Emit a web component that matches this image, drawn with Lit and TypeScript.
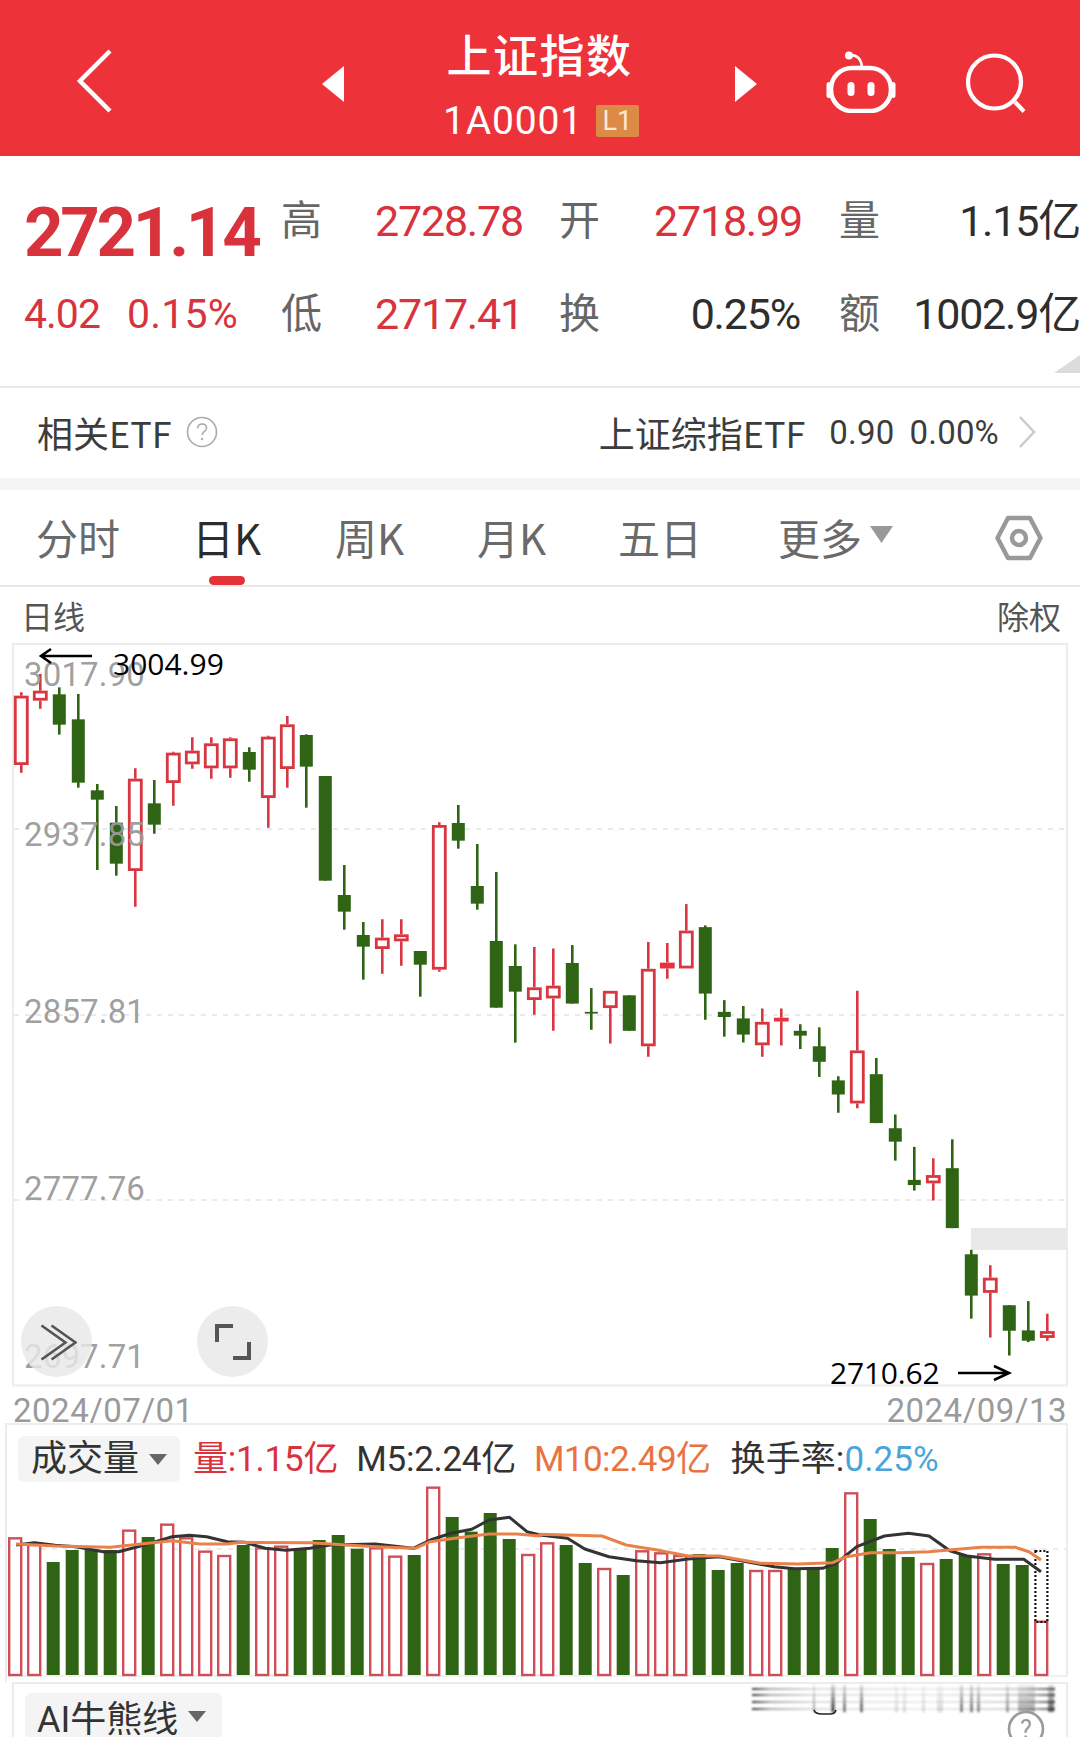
import { LitElement, html, css, svg } from "lit";
import { customElement } from "lit/decorators.js";

const GREEN = "#2f6414";
const FX = 2.904;

type C = [string, number, number, number, number];
// candle coordinates are read from the reference: first block y = 660 + v/3
const A: C[] = [
  ["r",97,107,315,338],["r",42,92,122,146],["g",82,103,194,224],["g",102,178,368,383],["g",372,391,419,630],
  ["g",438,488,611,647],["r",325,356,633,740],["g",360,430,494,521],["r",275,278,369,437],["r",232,272,313,326],
  ["r",232,250,325,356],["r",232,235,325,353],["g",262,276,329,365],["r",227,230,414,503],["r",168,193,327,383],
  ["g",223,225,320,443],["g",348,348,662,662],["g",615,705,755,809],["g",786,825,860,959],["r",778,833,867,941],
  ["r",778,823,844,917],["g",873,873,914,1010],["r",487,495,929,935],["g",435,489,542,566],["g",552,678,731,749],
  ["g",636,843,1043,1043],["g",853,918,995,1148],["r",861,982,1020,1064],
];
// second block y = 860 + v/2.904
const B: C[] = [
  ["r",257,365,402,496],["g",247,299,417,417],["g",372,441,446,493],["r",380,380,430,533],["g",393,393,496,496],
  ["r",238,316,541,571],["r",241,298,315,345],["r",128,205,315,315],["g",190,195,388,464],["g",407,441,456,513],
  ["g",424,460,507,530],["r",431,470,538,571],["r",431,458,468,539],["g",477,496,510,549],["g",486,541,586,630],
  ["g",628,640,681,734],["r",380,553,707,721],["g",575,622,764,764],["g",739,779,818,873],["g",833,929,944,960],
  ["r",866,915,939,989],["g",811,895,1069,1069],["g",1132,1145,1265,1332],["r",1177,1213,1257,1387],
  ["g",1293,1293,1367,1439],["g",1281,1366,1396,1400],["r",1318,1368,1388,1396],
];
const candles = [
  ...A.map(c => [c[0], ...c.slice(1).map(v => 660 + (v as number) / 3)]),
  ...B.map(c => [c[0], ...c.slice(1).map(v => 860 + (v as number) / FX)]),
] as C[];

const VA = [745,765,816,780,780,780,722,741,704,745,785,798,765,775,770,775,750,735,776,775,800,795,593,681,725,669,747,795];
const VB = [430,435,489,507,525,454,460,468,462,510,489,513,513,505,505,444,280,357,447,471,492,477,465,463,492,495,665];
const VT = [...VA.map(v => 1290 + v / 3), ...VB.map(v => 1400 + v / 3)];
const RED_V = new Set([0,1,6,8,9,10,11,13,14,19,20,22,27,28,31,33,34,35,39,40,44,48,51,54]);

const pa = (pts: number[][]) => pts.map(([x, y]) => [x / FX, 1290 + y / 3]);
const pb = (pts: number[][]) => pts.map(([x, y]) => [540 + x / FX, 1400 + y / 3]);
const toPath = (p: number[][]) => p.map(([x, y], i) => `${i ? "L" : "M"}${x.toFixed(1)} ${y.toFixed(1)}`).join("");

const M5 = toPath([
  ...pa([[47,765],[100,758],[160,766],[220,770],[300,785],[345,785],[430,762],[500,740],[550,736],[600,740],[660,755],[710,757],[770,775],[830,781],[900,775],[960,765],[1090,762],[1200,775],[1250,750],[1310,730],[1370,718],[1420,690],[1480,682],[1530,725],[1568,735]]),
  ...pb([[0,405],[80,415],[130,447],[200,470],[280,482],[350,488],[430,477],[520,470],[600,485],[680,500],[740,506],[820,505],[860,490],[920,440],[1000,408],[1070,400],[1130,408],[1190,452],[1240,468],[1320,478],[1405,478],[1455,515]]),
]);
const M10 = toPath([
  ...pa([[47,762],[160,768],[320,772],[430,760],[500,752],[580,762],[660,762],[700,757],[900,758],[1090,770],[1205,775],[1250,755],[1320,745],[1420,732],[1500,732],[1568,738]]),
  ...pb([[0,403],[180,408],[250,435],[340,450],[430,468],[520,468],[640,490],[750,492],[850,488],[890,470],[960,458],[1040,458],[1130,455],[1280,442],[1380,442],[1420,455],[1455,480]]),
]);

@customElement("app-root")
export class AppRoot extends LitElement {
  static styles = css`
    :host { display: block; width: 1080px; height: 1737px; overflow: hidden; background: #fff;
      font-family: "Noto Sans CJK SC", "Noto Sans", sans-serif; color: #333; }
    .num { font-family: Roboto, "Noto Sans CJK SC", sans-serif; }

    .head { height: 156px; background: #ee323a; color: #fff; display: flex; align-items: center; padding-left: 76px; box-sizing: border-box; }
    .back { width: 36px; height: 64px; display: block; margin-top: 6px; }
    .tri { width: 22px; height: 36px; display: block; margin-top: 12px; }
    .tri.l { margin-left: 210px; }
    .title { width: 391px; display: flex; flex-direction: column; align-items: center; margin-top: 10px; }
    .title h1 { margin: 0; font-size: 45px; line-height: 50px; font-weight: 500; letter-spacing: 1.5px; }
    .code { display: flex; align-items: center; gap: 13px; margin-top: 26px; height: 32px; padding-left: 3px; }
    .code span { font-size: 39px; letter-spacing: 0.8px; }
    .code b { width: 43px; height: 32px; background: #dc8a46; border-radius: 2px; font: 400 27px/32px Roboto, sans-serif; text-align: center; color: #fde9d4; }
    .robot { width: 70px; height: 62px; margin-left: 69px; display: block; margin-top: 8px; }
    .search { width: 60px; height: 60px; margin-left: 70px; display: block; margin-top: 10px; }

    .quote { position: relative; height: 232px; box-sizing: border-box; border-bottom: 2px solid #e8e8e8; padding: 45px 0 0 24px;
      display: grid; grid-template-columns: 257px 94px 184px 95px 146px 80px 200px; grid-template-rows: 40px 40px; row-gap: 53px; align-items: center; }
    .quote .lb { font-size: 41px; line-height: 40px; color: #666; }
    .quote .val { font-size: 43px; line-height: 40px; letter-spacing: -1.2px; white-space: nowrap; }
    .red { color: #d8333c; }
    .dark { color: #2e2e2e; }
    .right { justify-self: end; }
    .price { font-size: 69px; line-height: 40px; font-weight: 700; letter-spacing: -3.3px; margin-top: 24px; }
    .chg { display: flex; gap: 27px; font-size: 41px; line-height: 40px; letter-spacing: -1px; }
    .chg .pct { letter-spacing: 0.2px; }
    .corner { position: absolute; right: 0; bottom: 13px; width: 26px; height: 18px; }

    .etf { height: 90px; box-sizing: border-box; display: flex; align-items: center; padding: 0 44px 2px 37px; font-size: 36px; color: #3c3c3c; }
    .etf .q { width: 32px; height: 32px; margin-left: 14px; display: block; }
    .etf .sp { flex: 1; }
    .etf .n { font-size: 33px; letter-spacing: 0.2px; }
    .etf .n.a { margin-left: 24px; }
    .etf .n.b { margin-left: 15px; }
    .etf .chev { width: 18px; height: 32px; margin-left: 19px; display: block; }
    .band { height: 12px; background: #f5f5f5; }

    .tabs { position: relative; height: 97px; box-sizing: border-box; border-bottom: 2px solid #e8e8e8; padding: 10px 0 0 36px;
      display: grid; grid-template-columns: 156px 143px 142px 141px 160px 217px 48px; align-items: center; align-content: start;
      font-size: 42px; line-height: 74px; color: #6a6a6a; }
    .tabs .on { color: #2c2c2c; position: relative; }
    .tabs .on i { position: absolute; left: 17px; top: 76px; width: 36px; height: 9px; border-radius: 5px; background: #e2333b; }
    .tabs .more { display: flex; align-items: center; gap: 8px; }
    .tabs .more svg { width: 23px; height: 17px; margin-top: -6px; }
    .hex { width: 48px; height: 46px; display: block; margin-top: 2px; }

    .sub { height: 56px; box-sizing: border-box; display: flex; justify-content: space-between; align-items: center; padding: 0 19px 0 21px; font-size: 32px; color: #555; }

    .chart { position: relative; height: 743px; }
    .chart > svg { display: block; width: 1080px; height: 743px; overflow: visible; }
    .btn { position: absolute; top: 663px; width: 71px; height: 71px; border-radius: 50%; background: rgba(232,232,232,.82); display: flex; align-items: center; justify-content: center; }
    .btn svg { width: 40px; height: 40px; display: block; }
    .btn.a { left: 21px; }
    .btn.b { left: 197px; }

    .dates { height: 37px; display: flex; justify-content: space-between; padding: 12px 13px 0 13px; box-sizing: border-box; font-size: 33px; line-height: 25px; letter-spacing: 0.5px; color: #9a9a9a; }

    .vol { position: relative; height: 259px; }
    .vol > svg { position: absolute; inset: 0; width: 1080px; height: 259px; display: block; }
    .legend { position: relative; display: flex; align-items: center; padding: 13px 0 0 18px; font-size: 35px; line-height: 46px; white-space: nowrap; }
    .legend > * { position: relative; top: 1px; }
    .pill { display: inline-flex; align-items: center; background: #f4f4f4; border-radius: 6px; height: 46px; color: #333; font-size: 36px; box-sizing: border-box; }
    .pill svg { width: 18px; height: 11px; display: block; }
    .legend .pill { width: 162px; padding-left: 13px; gap: 10px; top: 0; }
    .legend .t { margin-left: 13px; letter-spacing: -0.2px; }
    .legend .t.m5 { margin-left: 18px; color: #333; letter-spacing: -0.3px; }
    .legend .t.m10 { margin-left: 18px; color: #e8733f; letter-spacing: -0.55px; }
    .legend .t.tr { margin-left: 20px; color: #333; letter-spacing: 0.1px; }
    .blue { color: #4aa4da; }

    .ai { position: relative; height: 55px; box-sizing: border-box; padding: 11px 0 0 25px; }
    .ai > svg { position: absolute; inset: 0; width: 1080px; height: 55px; display: block; }
    .ai .pill { position: relative; height: 46px; width: 197px; padding-left: 12px; gap: 10px; }
  `;

  private candle(c: C, i: number) {
    const x = 21.3 + 19 * i;
    const [k, wt, bt, bb, wb] = c;
    if (k === "r") {
      const h = Math.max(bb - bt - 2.8, 1);
      return svg`<path d="M${x} ${wt}V${bt}M${x} ${bb}V${wb}" stroke="#d83640" stroke-width="2.6" fill="none"/>
        <rect x=${x - 6} y=${bt + 1.4} width="12" height=${h} fill=${h < 4 ? "#e8333c" : "#fff"} stroke=${h < 4 ? "#e8333c" : "#d83640"} stroke-width="2.8"/>`;
    }
    return svg`<path d="M${x} ${wt}V${wb}" stroke=${GREEN} stroke-width="2.6"/>
      <rect x=${x - 6.5} y=${bt} width="13" height=${bb - bt} fill=${GREEN}/>`;
  }

  private chartSvg() {
    const labels: [string, number][] = [["3017.90", 686], ["2937.85", 846], ["2857.81", 1023], ["2777.76", 1200], ["2697.71", 1368]];
    return svg`<svg viewBox="0 643 1080 743">
      <path d="M13 1386V644H1067V1386" fill="none" stroke="#ececec" stroke-width="2"/>
      <path d="M13 1385.500H1067" stroke="#ececec" stroke-width="2"/>
      <g stroke="#e4e4e4" stroke-width="1.500" stroke-dasharray="5 6">
        <path d="M14 829H1066"/><path d="M14 1015H1066"/><path d="M14 1200H1066"/>
      </g>
      <rect x="971" y="1228" width="96" height="22" fill="#e9e9e9"/>
      ${candles.map((c, i) => this.candle(c, i))}
      ${labels.map(([t, y]) => svg`<text x="24" y=${y} font-family="Roboto, sans-serif" font-size="33" fill="#9a9a9a" fill-opacity=".96" letter-spacing="0.15">${t}</text>`)}
      <g font-family="'Open Sans', sans-serif" font-size="30" fill="#000">
        <text x="113" y="675">3004.99</text>
        <text x="830" y="1384" letter-spacing="-0.2">2710.62</text>
      </g>
      <g fill="none" stroke="#000" stroke-width="2.600">
        <path d="M92 656H41M51 649L41 656L51 663"/>
        <path d="M958 1373H1009M994 1366L1009 1373L994 1380"/>
      </g>
    </svg>`;
  }

  private volSvg() {
    return svg`<svg viewBox="0 1423 1080 259">
      <path d="M6 1682V1424H1067V1676" fill="none" stroke="#ececec" stroke-width="2"/>
      <path d="M6 1676H1067" stroke="#ececec" stroke-width="1.500"/>
      <path d="M8 1549H1066" stroke="#e6e6e6" stroke-width="1.500" stroke-dasharray="5 6"/>
      ${VT.map((top, i) => {
        const x = 15.2 + 19 * i;
        return RED_V.has(i)
          ? svg`<rect x=${x - 6} y=${top} width="12" height=${1675 - top} fill="#fff" stroke="#cf4f58" stroke-width="2.400"/>`
          : svg`<rect x=${x - 6.5} y=${top} width="13" height=${1675 - top} fill=${GREEN}/>`;
      })}
      <rect x="1035.400" y="1551" width="12" height="71" fill="none" stroke="#111" stroke-width="2.200" stroke-dasharray="2 2"/>
      <path d=${M5} fill="none" stroke="#333" stroke-width="3" stroke-linejoin="round"/>
      <path d=${M10} fill="none" stroke="#e9824a" stroke-width="3" stroke-linejoin="round"/>
    </svg>`;
  }

  private aiSvg() {
    const ys = [1689, 1695, 1702, 1709];
    const xs: [number, number, number][] = [[813,2,.5],[831,4,.85],[843,3,.7],[860,3,.8],[895,3,.2],[903,3,.2],[922,3,.2],[937,6,.2],[960,3,.7],[970,3,.7],[977,3,.6],[1006,3,.5],[1018,17,.42],[1048,6,.7]];
    return svg`<svg viewBox="0 1682 1080 55">
      <defs>
        <linearGradient id="fade" x1="0" x2="1" y1="0" y2="0">
          <stop offset="0" stop-color="#333"/><stop offset=".06" stop-color="#aaa"/><stop offset=".2" stop-color="#ddd"/><stop offset=".6" stop-color="#eee"/><stop offset=".9" stop-color="#ccc"/><stop offset="1" stop-color="#444"/>
        </linearGradient>
        <linearGradient id="up" x1="0" x2="0" y1="0" y2="1">
          <stop offset="0" stop-color="#444" stop-opacity=".25"/><stop offset="1" stop-color="#222"/>
        </linearGradient>
        <filter id="soft" x="-5%" y="-30%" width="110%" height="160%"><feGaussianBlur stdDeviation="0.9"/></filter>
      </defs>
      <path d="M13 1737V1683H1067V1737" fill="none" stroke="#ececec" stroke-width="2"/>
      <g filter="url(#soft)">
        ${ys.map(y => svg`<rect x="752" y=${y - 1} width="303" height="2" fill="url(#fade)"/>`)}
        ${xs.map(([x, w, o]) => svg`<rect x=${x} y="1685" width=${w} height="27" fill="url(#up)" opacity=${o}/>`)}
      </g>
      <path d="M814 1710q1 4 8 4h8q5 0 6-4" fill="none" stroke="#222" stroke-width="1.500"/>
      <circle cx="1026" cy="1729" r="17" fill="#fff" stroke="#9a9a9a" stroke-width="2.600"/>
      <text x="1026" y="1738" text-anchor="middle" font-family="Roboto, sans-serif" font-size="25" fill="#9a9a9a">?</text>
    </svg>`;
  }

  render() {
    const caret = html`<svg viewBox="0 0 18 11"><path d="M0 0H18L9 11Z" fill="#666"/></svg>`;
    return html`
      <header class="head">
        <svg class="back" viewBox="0 0 36 64"><path d="M34 2L4 32L34 62" fill="none" stroke="#fff" stroke-width="4.500"/></svg>
        <svg class="tri l" viewBox="0 0 22 36"><path d="M22 0V36L0 18Z" fill="#fff"/></svg>
        <div class="title">
          <h1>上证指数</h1>
          <div class="code"><span class="num">1A0001</span><b>L1</b></div>
        </div>
        <svg class="tri" viewBox="0 0 22 36"><path d="M0 0V36L22 18Z" fill="#fff"/></svg>
        <svg class="robot" viewBox="0 0 70 62" fill="none" stroke="#fff">
          <circle cx="23" cy="4.500" r="4" fill="#fff" stroke="none"/>
          <path d="M24 4q11 0 12 12" stroke-width="2.500"/>
          <rect x="5" y="17" width="60" height="43" rx="21" stroke-width="4.600"/>
          <rect x="0.500" y="31" width="5" height="16" rx="2.500" fill="#fff" stroke="none"/>
          <rect x="64.500" y="31" width="5" height="16" rx="2.500" fill="#fff" stroke="none"/>
          <rect x="21.500" y="31" width="7" height="14" rx="3.500" fill="#fff" stroke="none"/>
          <rect x="41.500" y="31" width="7" height="14" rx="3.500" fill="#fff" stroke="none"/>
        </svg>
        <svg class="search" viewBox="0 0 60 60" fill="none" stroke="#fff" stroke-width="4.200">
          <circle cx="28.500" cy="29" r="26.500"/><path d="M49 49L58 58.500"/>
        </svg>
      </header>

      <section class="quote num">
        <div class="price red">2721.14</div>
        <div class="lb">高</div><div class="val red">2728.78</div>
        <div class="lb">开</div><div class="val red">2718.99</div>
        <div class="lb right">量</div><div class="val dark right">1.15亿</div>
        <div class="chg red"><span>4.02</span><span class="pct">0.15%</span></div>
        <div class="lb">低</div><div class="val red">2717.41</div>
        <div class="lb">换</div><div class="val dark right">0.25%</div>
        <div class="lb right">额</div><div class="val dark right">1002.9亿</div>
        <svg class="corner" viewBox="0 0 26 18"><path d="M26 0V18H0Z" fill="#dcdcdc"/></svg>
      </section>

      <section class="etf">
        <span>相关ETF</span>
        <svg class="q" viewBox="0 0 32 32"><circle cx="16" cy="16" r="14.500" fill="none" stroke="#aaa" stroke-width="1.600"/><path d="M11.500 12.500q.5-4.500 4.700-4.500q4.300 0 4.300 4q0 2.300-2.400 3.700q-1.900 1.100-1.900 3.300" fill="none" stroke="#aaa" stroke-width="1.600"/><circle cx="16" cy="23" r="1.200" fill="#aaa"/></svg>
        <span class="sp"></span>
        <span>上证综指ETF</span>
        <span class="n a num">0.90</span><span class="n b num">0.00%</span>
        <svg class="chev" viewBox="0 0 18 32"><path d="M2 1L16 16L2 31" fill="none" stroke="#ccc" stroke-width="2.500"/></svg>
      </section>
      <div class="band"></div>

      <nav class="tabs">
        <div>分时</div>
        <div class="on">日K<i></i></div>
        <div>周K</div>
        <div>月K</div>
        <div>五日</div>
        <div class="more">更多<svg viewBox="0 0 23 17"><path d="M0 0H23L11.500 17Z" fill="#999"/></svg></div>
        <svg class="hex" viewBox="0 0 48 46" fill="none" stroke="#999" stroke-width="4.500"><path d="M13 3H35L45.500 23L35 43H13L2.500 23Z" stroke-linejoin="round"/><circle cx="24" cy="23" r="7"/></svg>
      </nav>

      <div class="sub"><span>日线</span><span>除权</span></div>

      <section class="chart">
        ${this.chartSvg()}
        <div class="btn a"><svg viewBox="0 0 40 40" fill="none" stroke="#555" stroke-width="2.600"><path d="M4.500 3.500L28.500 20.500L4.500 37.500"/><path d="M14.500 3.500L38.500 20.500L14.500 37.500"/></svg></div>
        <div class="btn b"><svg viewBox="0 0 40 40" fill="none" stroke="#555" stroke-width="4"><path d="M4 20V4H20"/><path d="M20 36H36V20"/></svg></div>
      </section>

      <div class="dates num"><span>2024/07/01</span><span>2024/09/13</span></div>

      <section class="vol">
        ${this.volSvg()}
        <div class="legend num">
          <span class="pill">成交量${caret}</span>
          <span class="t red">量:1.15亿</span>
          <span class="t m5">M5:2.24亿</span>
          <span class="t m10">M10:2.49亿</span>
          <span class="t tr">换手率:<span class="blue">0.25%</span></span>
        </div>
      </section>

      <section class="ai num">
        ${this.aiSvg()}
        <span class="pill">AI牛熊线${caret}</span>
      </section>
    `;
  }
}
